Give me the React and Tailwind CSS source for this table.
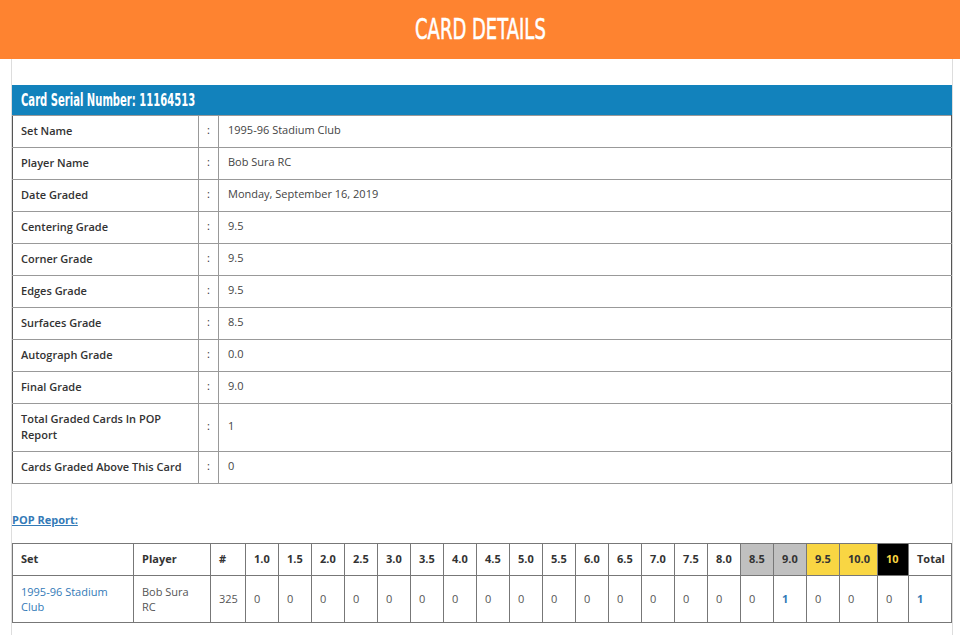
import React from "react";

const rows = [
  ["Set Name", "1995-96 Stadium Club"],
  ["Player Name", "Bob Sura RC"],
  ["Date Graded", "Monday, September 16, 2019"],
  ["Centering Grade", "9.5"],
  ["Corner Grade", "9.5"],
  ["Edges Grade", "9.5"],
  ["Surfaces Grade", "8.5"],
  ["Autograph Grade", "0.0"],
  ["Final Grade", "9.0"],
  ["Total Graded Cards In POP Report", "1"],
  ["Cards Graded Above This Card", "0"],
];

const grades = [
  "1.0","1.5","2.0","2.5","3.0","3.5","4.0","4.5","5.0","5.5","6.0","6.5","7.0","7.5","8.0",
];

export default function App() {
  const cond = { fontFamily: '"DejaVu Sans", sans-serif' };
  return (
    <div className="min-h-[635px] bg-white text-[#333]" style={{ fontFamily: '"Open Sans", "Noto Sans", sans-serif' }}>
      <div className="h-[59px] bg-[#fe8330] flex items-center justify-center">
        <h1 className="text-white text-[29px] leading-none scale-x-[0.62] font-normal whitespace-nowrap [-webkit-text-stroke:0.6px_white]" style={cond}>CARD DETAILS</h1>
      </div>
      <div className="mx-[11px] border-x border-[#dddddd] pt-[26px] pb-[12px] w-[942px]">
        <div className="h-[30px] bg-[#1282bc] flex items-center pl-[9px]">
          <span className="text-white text-[17px] leading-none scale-x-[0.59] origin-left whitespace-nowrap font-bold" style={cond}>Card Serial Number: 11164513</span>
        </div>
        <table className="w-full table-fixed border-collapse border border-[#555] text-[11px]">
          <colgroup>
            <col className="w-[186px]" />
            <col className="w-[20px]" />
            <col />
          </colgroup>
          <tbody>
            {rows.map(([k, v]) => (
              <tr key={k} className={k.startsWith("Total") ? "h-[48px]" : "h-[32px]"}>
                <td className="border border-[#999] border-l-[#555] pl-[8px] pr-[4px] pb-[2px] font-semibold leading-[16px]">{k}</td>
                <td className="border border-[#999] text-center pb-[2px]">:</td>
                <td className="border border-[#999] border-r-[#555] pl-[9px] pb-[2px] text-[#444]">{v}</td>
              </tr>
            ))}
          </tbody>
        </table>
        <div className="mt-[22px] mb-[13px]">
          <a className="text-[#337ab7] underline font-bold text-[11px]" href="#">POP Report:</a>
        </div>
        <table className="w-full table-fixed border-collapse border border-[#555] text-[11px]">
          <colgroup>
            <col className="w-[121px]" />
            <col className="w-[77px]" />
            <col className="w-[35px]" />
            {grades.map((g) => (
              <col key={g} className="w-[33px]" />
            ))}
            <col className="w-[33px]" />
            <col className="w-[33px]" />
            <col className="w-[33px]" />
            <col className="w-[38px]" />
            <col className="w-[31px]" />
            <col />
          </colgroup>
          <thead>
            <tr className="h-[32px] font-bold">
              <th className="border border-[#777] text-left pl-[8px]">Set</th>
              <th className="border border-[#777] text-left pl-[8px]">Player</th>
              <th className="border border-[#777] text-left pl-[8px]">#</th>
              {grades.map((g) => (
                <th key={g} className="border border-[#777] text-left pl-[8px]">{g}</th>
              ))}
              <th className="border border-[#777] text-left pl-[8px] bg-[#c0c0c0]">8.5</th>
              <th className="border border-[#777] text-left pl-[8px] bg-[#c0c0c0]">9.0</th>
              <th className="border border-[#777] text-left pl-[8px] bg-[#f9d643]">9.5</th>
              <th className="border border-[#777] text-left pl-[8px] bg-[#f9d643]">10.0</th>
              <th className="border border-[#777] text-left pl-[8px] bg-black text-[#f9d643]">10</th>
              <th className="border border-[#777] text-left pl-[8px]">Total</th>
            </tr>
          </thead>
          <tbody className="text-[#555]">
            <tr className="h-[47px]">
              <td className="border border-[#777] pl-[8px] pr-[6px] text-[#337ab7] leading-[15px]">1995-96 Stadium Club</td>
              <td className="border border-[#777] pl-[8px] pr-[6px] leading-[15px]">Bob Sura RC</td>
              <td className="border border-[#777] pl-[8px]">325</td>
              {grades.map((g) => (
                <td key={g} className="border border-[#777] pl-[8px]">0</td>
              ))}
              <td className="border border-[#777] pl-[8px]">0</td>
              <td className="border border-[#777] pl-[8px] text-[#337ab7] font-bold">1</td>
              <td className="border border-[#777] pl-[8px]">0</td>
              <td className="border border-[#777] pl-[8px]">0</td>
              <td className="border border-[#777] pl-[8px]">0</td>
              <td className="border border-[#777] pl-[8px] text-[#337ab7] font-bold">1</td>
            </tr>
          </tbody>
        </table>
      </div>
    </div>
  );
}
